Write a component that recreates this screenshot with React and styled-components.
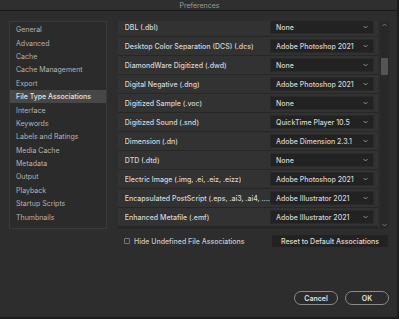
import React from 'react';
import styled, { createGlobalStyle } from 'styled-components';

const GlobalStyle = createGlobalStyle`
  html, body {
    margin: 0;
    padding: 0;
    background: #1c1c1c;
  }
  * {
    box-sizing: border-box;
  }
`;

const categories = [
    'General',
    'Advanced',
    'Cache',
    'Cache Management',
    'Export',
    'File Type Associations',
    'Interface',
    'Keywords',
    'Labels and Ratings',
    'Media Cache',
    'Metadata',
    'Output',
    'Playback',
    'Startup Scripts',
    'Thumbnails',
];

const associations = [
    ['DBL (.dbl)', 'None'],
    ['Desktop Color Separation (DCS) (.dcs)', 'Adobe Photoshop 2021'],
    ['DiamondWare Digitized (.dwd)', 'None'],
    ['Digital Negative (.dng)', 'Adobe Photoshop 2021'],
    ['Digitized Sample (.voc)', 'None'],
    ['Digitized Sound (.snd)', 'QuickTime Player 10.5'],
    ['Dimension (.dn)', 'Adobe Dimension 2.3.1'],
    ['DTD (.dtd)', 'None'],
    ['Electric Image (.img, .ei, .eiz, .eizz)', 'Adobe Photoshop 2021'],
    ['Encapsulated PostScript (.eps, .ai3, .ai4, ....', 'Adobe Illustrator 2021'],
    ['Enhanced Metafile (.emf)', 'Adobe Illustrator 2021'],
];

const Window = styled.div`
  width: 397px;
  height: 317px;
  background: #2d2d2d;
  font-family: Inter, 'Liberation Sans', sans-serif;
  font-size: 7px;
  display: flex;
  flex-direction: column;
  overflow: hidden;
`;

const TitleBar = styled.div`
  height: 11px;
  flex-shrink: 0;
  background: #2f2f2f;
  border-bottom: 1px solid #191919;
  display: flex;
  align-items: center;
  justify-content: center;
  color: #9a9a9a;
  font-size: 7px;
  padding-left: 2px;
`;

const Body = styled.div`
  flex: 1;
  display: flex;
  flex-direction: column;
  padding: 10px 8px 0 9px;
`;

const Panes = styled.div`
  display: flex;
  gap: 11px;
  height: 208px;
`;

const Sidebar = styled.div`
  width: 104px;
  background: #2b2b2b;
  border: 1px solid #3a3a3a;
  padding-top: 1px;
  display: flex;
  flex-direction: column;
`;

const SideItem = styled.div`
  height: 13.4px;
  flex-shrink: 0;
  display: flex;
  align-items: center;
  padding-left: 6px;
  color: ${(props) => (props.selected ? '#e4e4e4' : '#b4b4b4')};
  background: ${(props) => (props.selected ? '#474747' : 'transparent')};
  font-weight: ${(props) => (props.selected ? 500 : 400)};
  white-space: nowrap;
`;

const ListArea = styled.div`
  flex: 1;
  display: flex;
  gap: 2px;
`;

const List = styled.div`
  flex: 1;
  overflow: hidden;
  background: #262626;
`;

const ListInner = styled.div`
  margin-top: -3px;
  display: flex;
  flex-direction: column;
`;

const Row = styled.div`
  height: 19px;
  flex-shrink: 0;
  display: flex;
  align-items: center;
  justify-content: space-between;
  background: #323232;
  border-bottom: 1px solid #272727;
  padding: 0 4px 0 7px;
`;

const RowLabel = styled.span`
  color: #d6d6d6;
  font-weight: 500;
  white-space: nowrap;
  overflow: hidden;
`;

const Select = styled.div`
  width: 104px;
  height: 14px;
  flex-shrink: 0;
  background: #222;
  border: 1px solid #2a2a2a;
  border-radius: 1px;
  display: flex;
  align-items: center;
  justify-content: space-between;
  padding: 0 5px 0 5px;
  color: #d4d4d4;
  font-weight: 500;
  white-space: nowrap;
`;

const Scrollbar = styled.div`
  width: 9px;
  background: #282828;
  display: flex;
  flex-direction: column;
  align-items: center;
  justify-content: space-between;
  padding: 2px 0;
  position: relative;
`;

const Thumb = styled.div`
  position: absolute;
  left: 1px;
  right: 1px;
  top: 37px;
  height: 17px;
  background: #555;
  border-radius: 1px;
`;

const Footer = styled.div`
  display: flex;
  align-items: center;
  justify-content: space-between;
  margin-top: 5px;
  padding-left: 115px;
`;

const CheckLabel = styled.label`
  display: flex;
  align-items: center;
  gap: 4px;
  color: #c8c8c8;
  font-weight: 500;
`;

const Box = styled.span`
  width: 6px;
  height: 6px;
  border: 1px solid #777;
  border-radius: 1px;
`;

const ResetButton = styled.div`
  width: 118px;
  height: 14px;
  background: #222;
  border: 1px solid #2c2c2c;
  display: flex;
  align-items: center;
  justify-content: center;
  color: #dcdcdc;
  font-weight: 500;
`;

const Actions = styled.div`
  display: flex;
  justify-content: flex-end;
  gap: 7px;
  margin-top: 43px;
`;

const PillButton = styled.div`
  width: 44px;
  height: 14px;
  border: 1px solid #8a8a8a;
  border-radius: 8px;
  display: flex;
  align-items: center;
  justify-content: center;
  color: #e2e2e2;
  font-weight: 600;
  background: #2b2b2b;
`;

const Chevron = ({ up, color = '#9a9a9a' }) => (
    <svg width="5" height="4" viewBox="0 0 5 4">
        <path
            d={up ? 'M0.5 3 L2.5 1 L4.5 3' : 'M0.5 1 L2.5 3 L4.5 1'}
            fill="none"
            stroke={color}
            strokeWidth="0.9"
        />
    </svg>
);

export default function App() {
    return (
        <>
            <GlobalStyle />
            <Window>
                <TitleBar>Preferences</TitleBar>
                <Body>
                    <Panes>
                        <Sidebar>
                            {categories.map((c) => (
                                <SideItem key={c} selected={c === 'File Type Associations'}>
                                    {c}
                                </SideItem>
                            ))}
                        </Sidebar>
                        <ListArea>
                            <List>
                                <ListInner>
                                    {associations.map(([label, app]) => (
                                        <Row key={label}>
                                            <RowLabel>{label}</RowLabel>
                                            <Select>
                                                <span>{app}</span>
                                                <Chevron />
                                            </Select>
                                        </Row>
                                    ))}
                                </ListInner>
                            </List>
                            <Scrollbar>
                                <Chevron up color="#7a7a7a" />
                                <Thumb />
                                <Chevron color="#7a7a7a" />
                            </Scrollbar>
                        </ListArea>
                    </Panes>
                    <Footer>
                        <CheckLabel>
                            <Box />
                            Hide Undefined File Associations
                        </CheckLabel>
                        <ResetButton>Reset to Default Associations</ResetButton>
                    </Footer>
                    <Actions>
                        <PillButton>Cancel</PillButton>
                        <PillButton>OK</PillButton>
                    </Actions>
                </Body>
            </Window>
        </>
    );
}
